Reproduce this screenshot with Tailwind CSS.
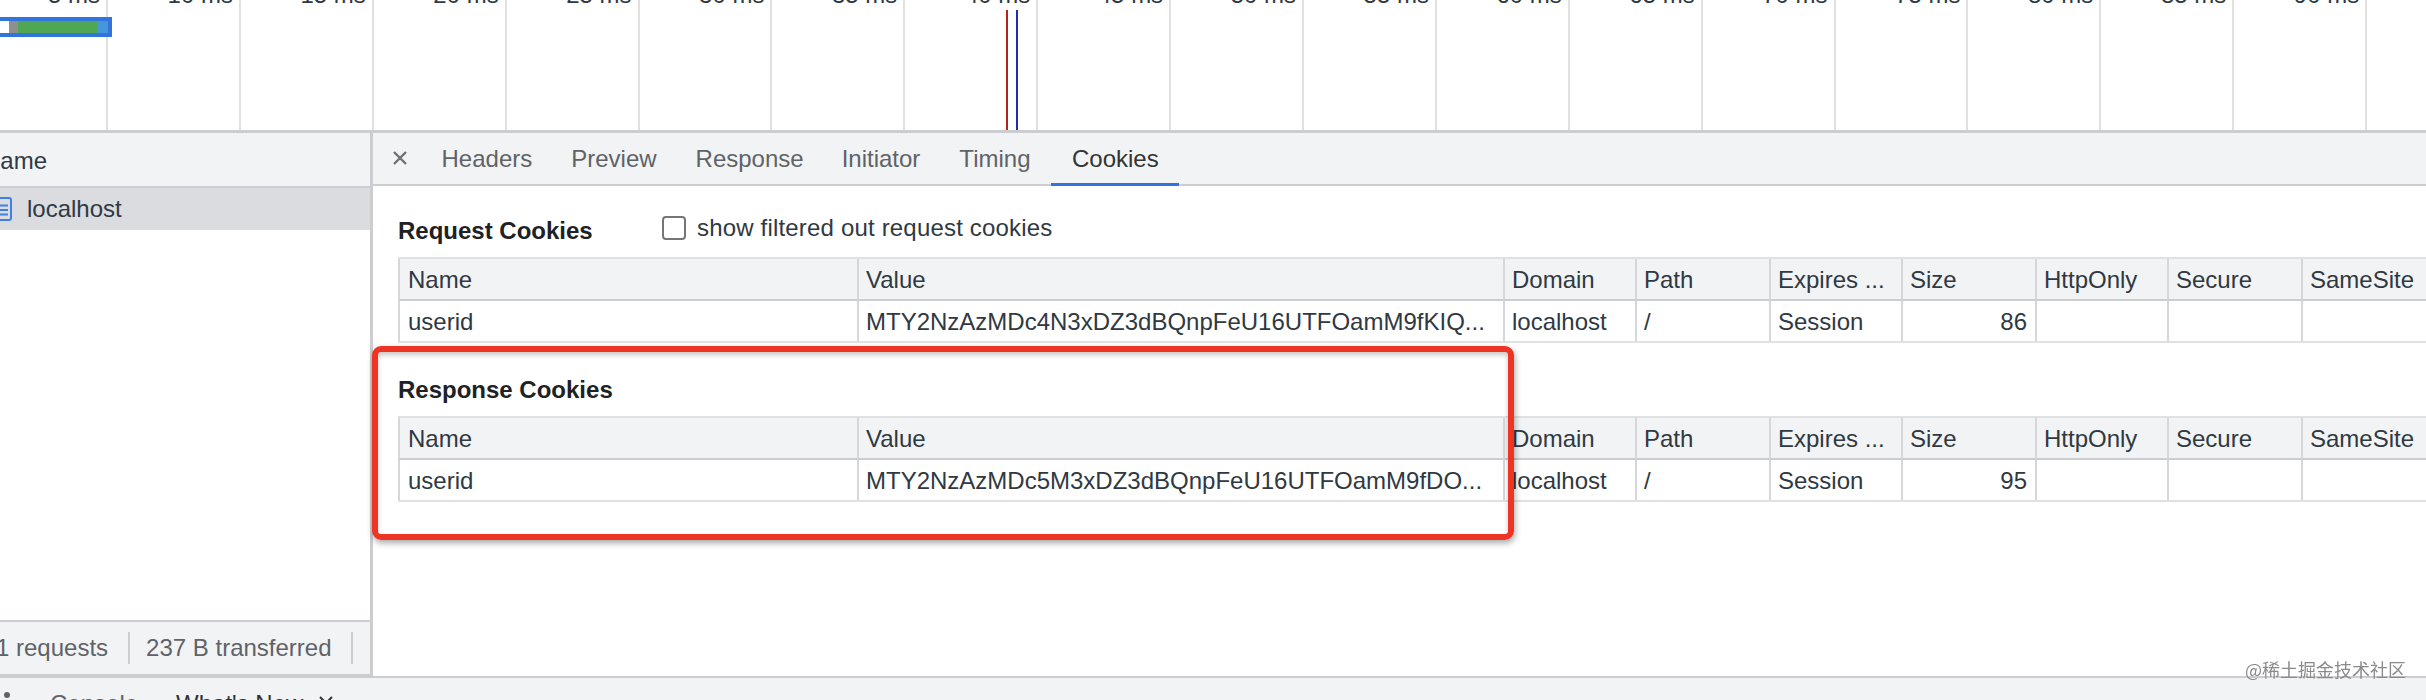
<!DOCTYPE html>
<html lang="en">
<head>
<meta charset="utf-8">
<title>Cookies</title>
<script src="https://cdn.jsdelivr.net/npm/@tailwindcss/browser@4"></script>
</head>
<body class="m-0 bg-white">
<div class="relative w-[2426px] h-[700px] overflow-hidden flex flex-col bg-white font-['Liberation_Sans',Arial,sans-serif] text-[24px] leading-[28px] text-[#303942]">

  <!-- overview timeline -->
  <div class="relative h-[130px] shrink-0 flex overflow-hidden">
    <div class="w-[108px] shrink-0 border-r-2 border-[#e0e0e0] flex justify-end pr-[6px]"><span class="-mt-[19px] whitespace-nowrap">5 ms</span></div>
    <div class="w-[132.9px] shrink-0 border-r-2 border-[#e0e0e0] flex justify-end pr-[6px]"><span class="-mt-[19px] whitespace-nowrap">10 ms</span></div>
    <div class="w-[132.9px] shrink-0 border-r-2 border-[#e0e0e0] flex justify-end pr-[6px]"><span class="-mt-[19px] whitespace-nowrap">15 ms</span></div>
    <div class="w-[132.9px] shrink-0 border-r-2 border-[#e0e0e0] flex justify-end pr-[6px]"><span class="-mt-[19px] whitespace-nowrap">20 ms</span></div>
    <div class="w-[132.9px] shrink-0 border-r-2 border-[#e0e0e0] flex justify-end pr-[6px]"><span class="-mt-[19px] whitespace-nowrap">25 ms</span></div>
    <div class="w-[132.9px] shrink-0 border-r-2 border-[#e0e0e0] flex justify-end pr-[6px]"><span class="-mt-[19px] whitespace-nowrap">30 ms</span></div>
    <div class="w-[132.9px] shrink-0 border-r-2 border-[#e0e0e0] flex justify-end pr-[6px]"><span class="-mt-[19px] whitespace-nowrap">35 ms</span></div>
    <div class="w-[132.9px] shrink-0 border-r-2 border-[#e0e0e0] flex justify-end pr-[6px]"><span class="-mt-[19px] whitespace-nowrap">40 ms</span></div>
    <div class="w-[132.9px] shrink-0 border-r-2 border-[#e0e0e0] flex justify-end pr-[6px]"><span class="-mt-[19px] whitespace-nowrap">45 ms</span></div>
    <div class="w-[132.9px] shrink-0 border-r-2 border-[#e0e0e0] flex justify-end pr-[6px]"><span class="-mt-[19px] whitespace-nowrap">50 ms</span></div>
    <div class="w-[132.9px] shrink-0 border-r-2 border-[#e0e0e0] flex justify-end pr-[6px]"><span class="-mt-[19px] whitespace-nowrap">55 ms</span></div>
    <div class="w-[132.9px] shrink-0 border-r-2 border-[#e0e0e0] flex justify-end pr-[6px]"><span class="-mt-[19px] whitespace-nowrap">60 ms</span></div>
    <div class="w-[132.9px] shrink-0 border-r-2 border-[#e0e0e0] flex justify-end pr-[6px]"><span class="-mt-[19px] whitespace-nowrap">65 ms</span></div>
    <div class="w-[132.9px] shrink-0 border-r-2 border-[#e0e0e0] flex justify-end pr-[6px]"><span class="-mt-[19px] whitespace-nowrap">70 ms</span></div>
    <div class="w-[132.9px] shrink-0 border-r-2 border-[#e0e0e0] flex justify-end pr-[6px]"><span class="-mt-[19px] whitespace-nowrap">75 ms</span></div>
    <div class="w-[132.9px] shrink-0 border-r-2 border-[#e0e0e0] flex justify-end pr-[6px]"><span class="-mt-[19px] whitespace-nowrap">80 ms</span></div>
    <div class="w-[132.9px] shrink-0 border-r-2 border-[#e0e0e0] flex justify-end pr-[6px]"><span class="-mt-[19px] whitespace-nowrap">85 ms</span></div>
    <div class="w-[132.9px] shrink-0 border-r-2 border-[#e0e0e0] flex justify-end pr-[6px]"><span class="-mt-[19px] whitespace-nowrap">90 ms</span></div>

    <!-- request bar -->
    <div class="absolute left-0 top-[17px] w-[112px] h-[20px] bg-[#3274de] flex items-stretch py-[4px] pr-[4px]">
      <div class="w-[9px] bg-white"></div>
      <div class="w-[9px] bg-[#8f8f8f]"></div>
      <div class="w-[79px] bg-[#4fa653]"></div>
      <div class="w-[11px] bg-[#4596da]"></div>
    </div>
    <!-- load markers -->
    <div class="absolute left-[1006px] top-[10px] bottom-0 w-[2px] bg-[#b3261e]"></div>
    <div class="absolute left-[1016px] top-[10px] bottom-0 w-[2px] bg-[#1c2fae]"></div>
  </div>

  <!-- panels -->
  <div class="h-[546px] shrink-0 flex border-t-[3px] border-[#cbcdd1]">
    <!-- request list -->
    <div class="w-[373px] shrink-0 flex flex-col border-r-[3px] border-b-2 border-[#cbcdd1]">
      <div class="h-[55px] shrink-0 bg-[#f1f3f4] border-b-2 border-[#cbcdd1] pt-[14px] overflow-hidden">
        <span class="block -ml-[17px] whitespace-nowrap">Name</span>
      </div>
      <div class="h-[42px] shrink-0 bg-[#dadce0] flex items-center">
        <svg class="w-[12px] h-[24px] shrink-0" viewBox="0 0 12 24" fill="none" stroke="#3f7fe8" stroke-width="2"><rect x="-10" y="1" width="21" height="22" rx="2"/><path d="M0 8.5h8M0 13h8M0 17.5h8"/></svg>
        <span class="ml-[15px] whitespace-nowrap">localhost</span>
      </div>
      <div class="flex-1"></div>
      <div class="h-[54px] shrink-0 bg-[#f1f3f4] border-t-2 border-[#cbcdd1] flex items-center text-[#5f6368]">
        <span class="-ml-[4px] whitespace-nowrap">1 requests</span>
        <span class="w-[2px] h-[32px] bg-[#cbcdd1] ml-[20px] mr-[16px]"></span>
        <span class="whitespace-nowrap">237 B transferred</span>
        <span class="w-[2px] h-[32px] bg-[#cbcdd1] ml-[19px]"></span>
      </div>
    </div>

    <!-- details -->
    <div class="flex-1 min-w-0 flex flex-col">
      <div class="h-[53px] shrink-0 bg-[#f1f3f4] border-b-2 border-[#cbcdd1] flex items-start text-[#5f6368]">
        <svg class="w-[16px] h-[16px] ml-[19px] mt-[17px] shrink-0" viewBox="0 0 16 16" fill="none" stroke="#6e7074" stroke-width="2.4"><path d="M2 2l12 12M14 2L2 14"/></svg>
        <div class="ml-[14px] h-[53px] px-[19.5px] pt-[12px]">Headers</div>
        <div class="h-[53px] px-[19.5px] pt-[12px]">Preview</div>
        <div class="h-[53px] px-[19.5px] pt-[12px]">Response</div>
        <div class="h-[53px] pl-[18.5px] pr-[19.5px] pt-[12px]">Initiator</div>
        <div class="h-[53px] pl-[19.5px] pr-[21px] pt-[12px]">Timing</div>
        <div class="h-[53px] pl-[20.5px] pr-[20px] pt-[12px] text-[#333333] border-b-[3px] border-[#3274de]">Cookies</div>
      </div>

      <div class="pl-[25px] pt-[31px]">
        <div class="flex items-start h-[28px]">
          <div class="w-[264px] shrink-0 font-bold text-[#202124] whitespace-nowrap">Request Cookies</div>
          <label class="flex items-center gap-[11px] -mt-[3px] text-[#303942] whitespace-nowrap tracking-[0.18px]">
            <span class="w-[24px] h-[24px] rounded-[4px] border-2 border-[#767676] bg-white"></span>
            show filtered out request cookies
          </label>
        </div>
        <div class="mt-[12px] border-y-2 border-[#dfe1e3] grid grid-cols-[459px_646px_132px_134px_132px_134px_132px_134px_125px]">
          <div class="h-[42px] bg-[#f1f3f4] border-b-2 border-l-2 border-b-[#cbcdd1] border-l-[#d5d7da] pl-[8px] pt-[7px]">Name</div>
          <div class="h-[42px] bg-[#f1f3f4] border-b-2 border-l-2 border-b-[#cbcdd1] border-l-[#d5d7da] pl-[7px] pt-[7px]">Value</div>
          <div class="h-[42px] bg-[#f1f3f4] border-b-2 border-l-2 border-b-[#cbcdd1] border-l-[#d5d7da] pl-[7px] pt-[7px]">Domain</div>
          <div class="h-[42px] bg-[#f1f3f4] border-b-2 border-l-2 border-b-[#cbcdd1] border-l-[#d5d7da] pl-[7px] pt-[7px]">Path</div>
          <div class="h-[42px] bg-[#f1f3f4] border-b-2 border-l-2 border-b-[#cbcdd1] border-l-[#d5d7da] pl-[7px] pt-[7px] whitespace-nowrap">Expires ...</div>
          <div class="h-[42px] bg-[#f1f3f4] border-b-2 border-l-2 border-b-[#cbcdd1] border-l-[#d5d7da] pl-[7px] pt-[7px]">Size</div>
          <div class="h-[42px] bg-[#f1f3f4] border-b-2 border-l-2 border-b-[#cbcdd1] border-l-[#d5d7da] pl-[7px] pt-[7px]">HttpOnly</div>
          <div class="h-[42px] bg-[#f1f3f4] border-b-2 border-l-2 border-b-[#cbcdd1] border-l-[#d5d7da] pl-[7px] pt-[7px]">Secure</div>
          <div class="h-[42px] bg-[#f1f3f4] border-b-2 border-l-2 border-b-[#cbcdd1] border-l-[#d5d7da] pl-[7px] pt-[7px]">SameSite</div>

          <div class="h-[40px] border-l-2 border-[#d5d7da] pl-[8px] pt-[7px]">userid</div>
          <div class="h-[40px] border-l-2 border-[#d5d7da] pl-[7px] pt-[7px] whitespace-nowrap overflow-hidden">MTY2NzAzMDc4N3xDZ3dBQnpFeU16UTFOamM9fKIQ...</div>
          <div class="h-[40px] border-l-2 border-[#d5d7da] pl-[7px] pt-[7px]">localhost</div>
          <div class="h-[40px] border-l-2 border-[#d5d7da] pl-[7px] pt-[7px]">/</div>
          <div class="h-[40px] border-l-2 border-[#d5d7da] pl-[7px] pt-[7px]">Session</div>
          <div class="h-[40px] border-l-2 border-[#d5d7da] pr-[8px] pt-[7px] text-right">86</div>
          <div class="h-[40px] border-l-2 border-[#d5d7da]"></div>
          <div class="h-[40px] border-l-2 border-[#d5d7da]"></div>
          <div class="h-[40px] border-l-2 border-[#d5d7da]"></div>
        </div>

        <div class="mt-[33px] font-bold text-[#202124] whitespace-nowrap">Response Cookies</div>
        <div class="mt-[12px] border-y-2 border-[#dfe1e3] grid grid-cols-[459px_646px_132px_134px_132px_134px_132px_134px_125px]">
          <div class="h-[42px] bg-[#f1f3f4] border-b-2 border-l-2 border-b-[#cbcdd1] border-l-[#d5d7da] pl-[8px] pt-[7px]">Name</div>
          <div class="h-[42px] bg-[#f1f3f4] border-b-2 border-l-2 border-b-[#cbcdd1] border-l-[#d5d7da] pl-[7px] pt-[7px]">Value</div>
          <div class="h-[42px] bg-[#f1f3f4] border-b-2 border-l-2 border-b-[#cbcdd1] border-l-[#d5d7da] pl-[7px] pt-[7px]">Domain</div>
          <div class="h-[42px] bg-[#f1f3f4] border-b-2 border-l-2 border-b-[#cbcdd1] border-l-[#d5d7da] pl-[7px] pt-[7px]">Path</div>
          <div class="h-[42px] bg-[#f1f3f4] border-b-2 border-l-2 border-b-[#cbcdd1] border-l-[#d5d7da] pl-[7px] pt-[7px] whitespace-nowrap">Expires ...</div>
          <div class="h-[42px] bg-[#f1f3f4] border-b-2 border-l-2 border-b-[#cbcdd1] border-l-[#d5d7da] pl-[7px] pt-[7px]">Size</div>
          <div class="h-[42px] bg-[#f1f3f4] border-b-2 border-l-2 border-b-[#cbcdd1] border-l-[#d5d7da] pl-[7px] pt-[7px]">HttpOnly</div>
          <div class="h-[42px] bg-[#f1f3f4] border-b-2 border-l-2 border-b-[#cbcdd1] border-l-[#d5d7da] pl-[7px] pt-[7px]">Secure</div>
          <div class="h-[42px] bg-[#f1f3f4] border-b-2 border-l-2 border-b-[#cbcdd1] border-l-[#d5d7da] pl-[7px] pt-[7px]">SameSite</div>

          <div class="h-[40px] border-l-2 border-[#d5d7da] pl-[8px] pt-[7px]">userid</div>
          <div class="h-[40px] border-l-2 border-[#d5d7da] pl-[7px] pt-[7px] whitespace-nowrap overflow-hidden">MTY2NzAzMDc5M3xDZ3dBQnpFeU16UTFOamM9fDO...</div>
          <div class="h-[40px] border-l-2 border-[#d5d7da] pl-[7px] pt-[7px]">localhost</div>
          <div class="h-[40px] border-l-2 border-[#d5d7da] pl-[7px] pt-[7px]">/</div>
          <div class="h-[40px] border-l-2 border-[#d5d7da] pl-[7px] pt-[7px]">Session</div>
          <div class="h-[40px] border-l-2 border-[#d5d7da] pr-[8px] pt-[7px] text-right">95</div>
          <div class="h-[40px] border-l-2 border-[#d5d7da]"></div>
          <div class="h-[40px] border-l-2 border-[#d5d7da]"></div>
          <div class="h-[40px] border-l-2 border-[#d5d7da]"></div>
        </div>
      </div>
    </div>
  </div>

  <!-- drawer tabs -->
  <div class="flex-1 bg-[#f1f3f4] border-t-2 border-[#cbcdd1] flex items-start overflow-hidden">
    <span class="w-[6px] h-[6px] rounded-full bg-[#5f6368] ml-[4px] mt-[14px] shrink-0"></span>
    <span class="ml-[40px] mt-[12px] text-[#5f6368] whitespace-nowrap">Console</span>
    <span class="ml-[38px] mt-[12px] text-[#333333] whitespace-nowrap">What's New</span>
    <svg class="w-[14px] h-[14px] ml-[16px] mt-[18px] shrink-0" viewBox="0 0 14 14" fill="none" stroke="#333333" stroke-width="2"><path d="M1 1l12 12M13 1L1 13"/></svg>
  </div>

  <!-- annotation -->
  <div class="absolute left-[372px] top-[346px] w-[1142px] h-[194px] border-[6px] border-[#ee3524] rounded-[9px] shadow-[1px_3px_6px_rgba(0,0,0,0.35),inset_0_3px_5px_rgba(0,0,0,0.22)]"></div>

  <!-- watermark -->
  <div class="absolute left-[2245px] top-[656px] text-[18px] leading-[26px] text-[#8a8a8a] blur-[0.4px] font-['Noto_Sans_CJK_SC',sans-serif] whitespace-nowrap">@稀土掘金技术社区</div>
</div>
</body>
</html>
